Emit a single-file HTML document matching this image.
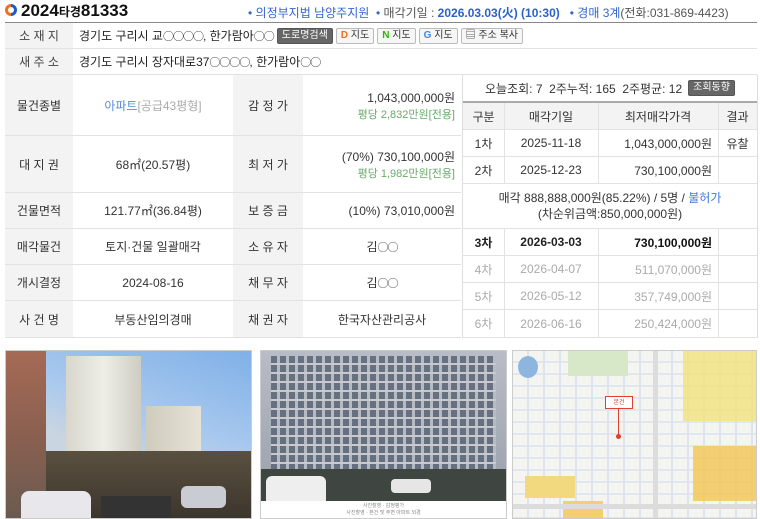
<!DOCTYPE html>
<html><head><meta charset="utf-8"><style>
*{box-sizing:border-box;margin:0;padding:0}
body{width:760px;height:519px;overflow:hidden;background:#fff;font-family:"Liberation Sans","Noto Sans CJK KR",sans-serif;font-size:12px;color:#333;position:relative}
.a{position:absolute}
.lbl{background:#f3f3f3;color:#444;text-align:center}
.cell{position:absolute;display:flex;align-items:center;justify-content:center;border-bottom:1px solid #e2e2e2}
.btn{display:inline-block;border:1px solid #bbb;border-radius:2px;background:#f6f6f6;font-size:10px;padding:0 4px;height:16px;line-height:14px;margin-left:3px;color:#333;vertical-align:middle}
.r{justify-content:flex-end;padding-right:6px}
.g{color:#aaa}
.t{color:#6aa96a;font-size:11px}
.o{font-family:"Noto Sans CJK KR",sans-serif;font-size:11px;letter-spacing:-1px}
</style></head><body>
<div class="a" style="left:5px;top:4px;width:12px;height:12px;border-radius:50%;background:conic-gradient(#1e5bc6 0 50%,#f07020 50% 100%)"></div>
<div class="a" style="left:8px;top:7px;width:6px;height:6px;border-radius:50%;background:#fff"></div>
<div class="a" style="left:21px;top:1px;font-size:17px;font-weight:bold;color:#111">2024<span style="font-size:12px">타경</span>81333</div>
<div class="a" style="left:248px;top:4px;font-size:12px;color:#3366cc">• 의정부지법 남양주지원 &nbsp;<span style="color:#3366cc">•</span> <span style="color:#555">매각기일 : </span><b style="color:#2a62c9">2026.03.03(火) (10:30)</b> &nbsp; • 경매 3계<span style="color:#555">(전화:031-869-4423)</span></div>
<div class="a" style="left:5px;top:22px;width:752px;height:1px;background:#888"></div>
<div class="cell lbl" style="left:5px;top:23px;width:68px;height:26px">소 재 지</div>
<div class="cell" style="left:73px;top:23px;width:684px;height:26px;justify-content:flex-start;padding-left:6px;color:#222">경기도 구리시 교<span class="o">○○○○</span>, 한가람아<span class="o">○○</span><span class="btn" style="background:#666;color:#fff;border-color:#555">도로명검색</span><span class="btn"><b style="color:#f07020">D</b> 지도</span><span class="btn"><b style="color:#2db400">N</b> 지도</span><span class="btn"><b style="color:#4285f4">G</b> 지도</span><span class="btn">▤ 주소 복사</span></div>
<div class="cell lbl" style="left:5px;top:49px;width:68px;height:26px">새 주 소</div>
<div class="cell" style="left:73px;top:49px;width:684px;height:26px;justify-content:flex-start;padding-left:6px;color:#222">경기도 구리시 장자대로37<span class="o">○○○○</span>, 한가람아<span class="o">○○</span></div>

<div class="a" style="left:5px;top:75px;width:68px;height:263px;background:#f3f3f3"></div>
<div class="a" style="left:233px;top:75px;width:70px;height:263px;background:#f3f3f3"></div>
<div class="cell" style="left:5px;top:75px;width:68px;height:61px">물건종별</div>
<div class="cell" style="left:73px;top:75px;width:160px;height:61px"><span style="color:#5b8dd6">아파트</span><span class="g">[공급43평형]</span></div>
<div class="cell" style="left:233px;top:75px;width:70px;height:61px">감 정 가</div>
<div class="cell r" style="left:303px;top:75px;width:158px;height:61px;flex-direction:column;align-items:flex-end;justify-content:center"><div>1,043,000,000원</div><div class="t">평당 2,832만원[전용]</div></div>
<div class="cell" style="left:5px;top:136px;width:68px;height:57px">대 지 권</div>
<div class="cell" style="left:73px;top:136px;width:160px;height:57px">68㎡(20.57평)</div>
<div class="cell" style="left:233px;top:136px;width:70px;height:57px">최 저 가</div>
<div class="cell r" style="left:303px;top:136px;width:158px;height:57px;flex-direction:column;align-items:flex-end;justify-content:center"><div>(70%) 730,100,000원</div><div class="t">평당 1,982만원[전용]</div></div>
<div class="cell" style="left:5px;top:193px;width:68px;height:36px">건물면적</div>
<div class="cell" style="left:73px;top:193px;width:160px;height:36px">121.77㎡(36.84평)</div>
<div class="cell" style="left:233px;top:193px;width:70px;height:36px">보 증 금</div>
<div class="cell r" style="left:303px;top:193px;width:158px;height:36px">(10%) 73,010,000원</div>
<div class="cell" style="left:5px;top:229px;width:68px;height:36px">매각물건</div>
<div class="cell" style="left:73px;top:229px;width:160px;height:36px">토지·건물 일괄매각</div>
<div class="cell" style="left:233px;top:229px;width:70px;height:36px">소 유 자</div>
<div class="cell" style="left:303px;top:229px;width:158px;height:36px">김<span class="o">○○</span></div>
<div class="cell" style="left:5px;top:265px;width:68px;height:36px">개시결정</div>
<div class="cell" style="left:73px;top:265px;width:160px;height:36px">2024-08-16</div>
<div class="cell" style="left:233px;top:265px;width:70px;height:36px">채 무 자</div>
<div class="cell" style="left:303px;top:265px;width:158px;height:36px">김<span class="o">○○</span></div>
<div class="cell" style="left:5px;top:301px;width:68px;height:37px">사 건 명</div>
<div class="cell" style="left:73px;top:301px;width:160px;height:37px">부동산임의경매</div>
<div class="cell" style="left:233px;top:301px;width:70px;height:37px">채 권 자</div>
<div class="cell" style="left:303px;top:301px;width:158px;height:37px">한국자산관리공사</div>

<div class="a" style="left:462px;top:75px;width:1px;height:263px;background:#ddd"></div>
<div class="cell" style="left:463px;top:75px;width:294px;height:28px;border-bottom:2px solid #aaa">오늘조회: 7 &nbsp;2주누적: 165 &nbsp;2주평균: 12 <span class="btn" style="background:#666;color:#fff;border-color:#555;margin-left:6px">조회동향</span></div>
<div class="a" style="left:463px;top:103px;width:294px;height:27px;background:#f3f3f3"></div>
<div class="cell" style="left:463px;top:103px;width:41px;height:27px">구분</div>
<div class="cell" style="left:504px;top:103px;width:94px;height:27px">매각기일</div>
<div class="cell" style="left:598px;top:103px;width:120px;height:27px">최저매각가격</div>
<div class="cell" style="left:718px;top:103px;width:39px;height:27px">결과</div>
<div class="a" style="left:504px;top:103px;width:1px;height:81px;background:#e2e2e2"></div>
<div class="a" style="left:598px;top:103px;width:1px;height:81px;background:#e2e2e2"></div>
<div class="a" style="left:718px;top:103px;width:1px;height:81px;background:#e2e2e2"></div>
<div class="cell" style="left:463px;top:130px;width:41px;height:27px">1차</div>
<div class="cell" style="left:504px;top:130px;width:94px;height:27px">2025-11-18</div>
<div class="cell r" style="left:598px;top:130px;width:120px;height:27px">1,043,000,000원</div>
<div class="cell" style="left:718px;top:130px;width:39px;height:27px">유찰</div>
<div class="cell" style="left:463px;top:157px;width:41px;height:27px">2차</div>
<div class="cell" style="left:504px;top:157px;width:94px;height:27px">2025-12-23</div>
<div class="cell r" style="left:598px;top:157px;width:120px;height:27px">730,100,000원</div>
<div class="cell" style="left:718px;top:157px;width:39px;height:27px"></div>
<div class="cell" style="left:463px;top:184px;width:294px;height:45px;flex-direction:column;line-height:16px"><div>매각 888,888,000원(85.22%) / 5명 / <span style="color:#3a7bd5">불허가</span></div><div>(차순위금액:850,000,000원)</div></div>
<div class="a" style="left:504px;top:229px;width:1px;height:109px;background:#e2e2e2"></div>
<div class="a" style="left:598px;top:229px;width:1px;height:109px;background:#e2e2e2"></div>
<div class="a" style="left:718px;top:229px;width:1px;height:109px;background:#e2e2e2"></div>
<div class="cell" style="left:463px;top:229px;width:41px;height:27px;font-weight:bold;color:#222">3차</div>
<div class="cell" style="left:504px;top:229px;width:94px;height:27px;font-weight:bold;color:#222">2026-03-03</div>
<div class="cell r" style="left:598px;top:229px;width:120px;height:27px;font-weight:bold;color:#111">730,100,000원</div>
<div class="cell" style="left:718px;top:229px;width:39px;height:27px"></div>
<div class="cell g" style="left:463px;top:256px;width:41px;height:27px">4차</div>
<div class="cell g" style="left:504px;top:256px;width:94px;height:27px">2026-04-07</div>
<div class="cell r g" style="left:598px;top:256px;width:120px;height:27px">511,070,000원</div>
<div class="cell" style="left:718px;top:256px;width:39px;height:27px"></div>
<div class="cell g" style="left:463px;top:283px;width:41px;height:27px">5차</div>
<div class="cell g" style="left:504px;top:283px;width:94px;height:27px">2026-05-12</div>
<div class="cell r g" style="left:598px;top:283px;width:120px;height:27px">357,749,000원</div>
<div class="cell" style="left:718px;top:283px;width:39px;height:27px"></div>
<div class="cell g" style="left:463px;top:310px;width:41px;height:28px">6차</div>
<div class="cell g" style="left:504px;top:310px;width:94px;height:28px">2026-06-16</div>
<div class="cell r g" style="left:598px;top:310px;width:120px;height:28px">250,424,000원</div>
<div class="cell" style="left:718px;top:310px;width:39px;height:28px"></div>
<div class="a" style="left:757px;top:75px;width:1px;height:263px;background:#ddd"></div>

<div class="a" style="left:5px;top:350px;width:247px;height:169px;border:1px solid #ccc;overflow:hidden;background:linear-gradient(200deg,#7fb0e8 0%,#a9c9ee 40%,#c9d5e0 60%)">
 <div class="a" style="left:0;top:0;width:40px;height:169px;background:linear-gradient(#a56a55,#8a6050 50%,#6a5a50)"></div>
 <div class="a" style="left:60px;top:5px;width:75px;height:140px;background:linear-gradient(90deg,#d8d6cc,#eeeee8,#cfcdc2)"></div>
 <div class="a" style="left:140px;top:55px;width:55px;height:90px;background:linear-gradient(90deg,#cfcbbd,#e6e2d6)"></div>
 <div class="a" style="left:40px;top:100px;width:205px;height:69px;background:linear-gradient(#5a5040,#3c352c)"></div>
 <div class="a" style="left:15px;top:140px;width:70px;height:29px;background:#e8e8ec;border-radius:8px 8px 0 0"></div>
 <div class="a" style="left:95px;top:145px;width:70px;height:24px;background:#333"></div>
 <div class="a" style="left:175px;top:135px;width:45px;height:22px;background:#c9ccd2;border-radius:6px"></div>
</div>
<div class="a" style="left:260px;top:350px;width:247px;height:169px;border:1px solid #ccc;overflow:hidden;background:#fff">
 <div class="a" style="left:0;top:0;width:245px;height:150px;background:linear-gradient(#b8bcc6,#9aa0ac)"></div>
 <div class="a" style="left:10px;top:5px;width:225px;height:140px;background:repeating-linear-gradient(90deg,#5f6a7a 0 6px,#b8bcc4 6px 9px),#888;opacity:.9"></div>
 <div class="a" style="left:10px;top:5px;width:225px;height:140px;background:repeating-linear-gradient(#0000 0 7px,#c8cad0 7px 9px)"></div>
 <div class="a" style="left:0;top:118px;width:245px;height:32px;background:#3f4540"></div>
 <div class="a" style="left:5px;top:125px;width:60px;height:25px;background:#eee;border-radius:6px 6px 0 0"></div>
 <div class="a" style="left:130px;top:128px;width:40px;height:14px;background:#e6e6e6;border-radius:4px"></div>
 <div class="a" style="left:0;top:152px;width:245px;text-align:center;font-size:5px;color:#888;line-height:7px">사진촬영 · 감정평가<br>사진촬영 · 본건 및 주변 아파트 외경</div>
</div>
<div class="a" style="left:512px;top:350px;width:245px;height:169px;border:1px solid #ccc;overflow:hidden;background:#f4f4f0">
 <div class="a" style="left:0;top:0;width:245px;height:169px;background:repeating-linear-gradient(90deg,#0000 0 14px,#dde3ef 14px 16px),repeating-linear-gradient(#0000 0 10px,#e2e6ee 10px 12px)"></div>
 <div class="a" style="left:5px;top:5px;width:20px;height:22px;border-radius:50%;background:#8db5e0"></div>
 <div class="a" style="left:55px;top:0;width:60px;height:25px;background:#d6e8c8"></div>
 <div class="a" style="left:170px;top:0;width:75px;height:70px;background:#f2e27a;opacity:.8"></div>
 <div class="a" style="left:180px;top:95px;width:65px;height:55px;background:#f2c85a;opacity:.85"></div>
 <div class="a" style="left:12px;top:125px;width:50px;height:22px;background:#f2d980"></div>
 <div class="a" style="left:50px;top:150px;width:40px;height:19px;background:#f2d070"></div>
 <div class="a" style="left:0;top:153px;width:245px;height:5px;background:#dcdcdc"></div>
 <div class="a" style="left:140px;top:0;width:5px;height:169px;background:#dcdcdc"></div>
 <div class="a" style="left:92px;top:45px;width:28px;height:13px;background:#fff;border:1px solid #e04030;font-size:6px;color:#e04030;text-align:center">본건</div>
 <div class="a" style="left:105px;top:58px;width:1px;height:26px;background:#e04030"></div>
 <div class="a" style="left:103px;top:83px;width:5px;height:5px;border-radius:50%;background:#e04030"></div>
</div>
</body></html>
